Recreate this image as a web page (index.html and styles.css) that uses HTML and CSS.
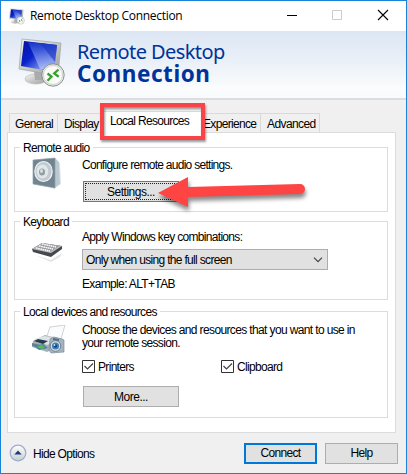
FILE: index.html
```html
<!DOCTYPE html>
<html lang="en">
<head>
<meta charset="utf-8">
<title>Remote Desktop Connection</title>
<link rel="stylesheet" href="styles.css">
</head>
<body>
<svg class="defs" width="0" height="0" aria-hidden="true">
  <defs>
    <linearGradient id="screen" x1="0" y1="0" x2="1" y2="1"><stop offset="0" stop-color="#0711a0"/><stop offset=".4" stop-color="#0922cc"/><stop offset=".75" stop-color="#829cf0"/><stop offset="1" stop-color="#2544c8"/></linearGradient>
    <linearGradient id="shine" x1="0" y1="0" x2="0" y2="1"><stop offset="0" stop-color="#1a3cd0"/><stop offset="1" stop-color="#c6d4fb"/></linearGradient>
    <linearGradient id="silver" x1="0" y1="0" x2="1" y2="1"><stop offset="0" stop-color="#f5f5f3"/><stop offset="1" stop-color="#9c9d9b"/></linearGradient>
    <symbol id="monitor" viewBox="0 0 48 50">
      <ellipse cx="18" cy="41" rx="11" ry="5" fill="url(#silver)" stroke="#b5b8ba" stroke-width=".6"/>
      <path d="M16 33l13 2-2 7H17z" fill="#a9acad"/>
      <path d="M4 1L43 5 40 38 1 31z" fill="url(#silver)" stroke="#a1a3a3" stroke-width=".7"/>
      <path d="M6 3L39 7 36 34 3 28z" fill="url(#screen)"/>
      <path d="M10 4L39 7 36 34 22 31z" fill="url(#shine)" opacity=".8"/>
      <path d="M22 5L39 7 37 24z" fill="#1a35c0" opacity=".6"/>
      <circle cx="35" cy="37" r="11.2" fill="#e9eae8" stroke="#777b79" stroke-width=".8"/>
      <circle cx="35" cy="37" r="9.5" fill="#fafaf9" stroke="#c2c5c2" stroke-width=".7"/>
      <path d="M29.500 35.500l4 3.200-4 4M40.500 31.500l-4.300 4 4.500 3.300" fill="none" stroke="#36a12d" stroke-width="2.300"/>
    </symbol>
  </defs>
</svg>
<div class="window">
  <header class="titlebar">
    <svg class="app-icon" viewBox="0 0 48 50"><use href="#monitor"/></svg>
    <span class="title">Remote Desktop Connection</span>
    <svg class="controls" viewBox="0 0 102 12"><path d="M0 6.500h10" stroke="#000"/><path d="M45.500 1.500h9v9h-9z" fill="none" stroke="#ccc"/><path d="M91 1l10 10M101 1L91 11" stroke="#000" stroke-width="1.100"/></svg>
  </header>
  <section class="banner">
    <svg class="logo" viewBox="0 0 48 50"><use href="#monitor"/></svg>
    <h1><span class="light">Remote Desktop</span><span class="bold">Connection</span></h1>
  </section>
  <main>
    <nav class="tabs">
      <span class="tab general">General</span><span class="tab display">Display</span><span class="tab selected">Local Resources</span><span class="tab experience">Experience</span><span class="tab advanced">Advanced</span>
    </nav>
    <div class="panel">
      <section class="group audio">
        <h2>Remote audio</h2>
        <svg class="icon" viewBox="0 0 34 34">
          <path d="M24 4l4 2 1 21-7 5-3-2z" fill="#e0e5e9"/><path d="M23 1l4 4 1 22-6 4z" fill="#bcc8d1"/>
          <path d="M1 3L23 1v30L1 27z" fill="#718490" stroke="#92a0aa" stroke-width=".7"/>
          <ellipse cx="11.500" cy="14.500" rx="8.700" ry="10" fill="#c1cbd1" stroke="#edf1f3" stroke-width="1.200"/>
          <ellipse cx="10.500" cy="14.500" rx="5.800" ry="7" fill="#e1e6e8"/><ellipse cx="10" cy="15" rx="3" ry="3.600" fill="#8f9da5"/><ellipse cx="9.500" cy="14" rx="1.500" ry="2" fill="#d9e0e3"/>
        </svg>
        <div class="content">
          <p class="configure">Configure remote audio settings.</p>
          <button class="settings"><span>Settings...</span></button>
        </div>
      </section>
      <section class="group keyboard">
        <h2>Keyboard</h2>
        <svg class="icon" viewBox="0 0 34 34">
          <path d="M3 20l16 5 11-7-2 4-9 5z" fill="#e4e4e4"/><path d="M0 14l10-6 20 3v3l-11 8L1 17z" fill="#45484d"/><path d="M0 14l10-6 20 3-11 7z" fill="#b7babd"/>
          <path d="M3 13.500l8-5 16 2.500-9 5.500z" fill="#96999c"/><path d="M4 13l14 3M7 11l14 3M10 9l14 3" stroke="#fafafa" stroke-width="1.500" stroke-dasharray="1.700 .5"/>
        </svg>
        <div class="content">
          <p class="apply">Apply Windows key combinations:</p>
          <div class="select"><span>Only when using the full screen</span><svg viewBox="0 0 10 6"><path d="M1 .7l4 4 4-4" fill="none" stroke="#444" stroke-width="1.200"/></svg></div>
          <p class="example">Example: ALT+TAB</p>
        </div>
      </section>
      <section class="group devices">
        <h2>Local devices and resources</h2>
        <svg class="icon" viewBox="0 0 34 34">
          <path d="M1 16l12-6 16 4v7L15 27 0 22z" fill="#a7afb6"/><path d="M15 11l3-9 15-2-4 14z" fill="#fbfcfd" stroke="#b9c0c4" stroke-width=".7"/>
          <path d="M2 14l11-3 16 4-14 5z" fill="#dfe4e7"/><path d="M6 14l10 2-5 3-9-3z" fill="#293b4c"/><path d="M0 18l13 3v3L0 21z" fill="#697e8c"/><path d="M2 21l9-2 5 4-9 2z" fill="#398ba9"/><path d="M5 22l4-2 4 2-3 2z" fill="#68b74b"/>
          <path d="M18 14l4-2 8 2 2 1v12l-13 1-2-3z" fill="#a7b4bf" stroke="#6c8190" stroke-width=".6"/><path d="M21 13l6 1v2l-6-1z" fill="#526f86"/>
          <circle cx="23.500" cy="21" r="5.300" fill="#d9e1e6" stroke="#5d7181" stroke-width=".8"/><circle cx="23.500" cy="21" r="3.600" fill="#3f80b9"/><circle cx="23.500" cy="21" r="1.700" fill="#174578"/><circle cx="22.500" cy="20" r=".9" fill="#b4e3ff"/>
        </svg>
        <div class="content">
          <p class="choose">Choose the devices and resources that you want to use in</p>
          <p class="session">your remote session.</p>
          <div class="checks">
            <label class="printers"><svg class="box" viewBox="0 0 13 13"><path d="M.5.5h12v12H.5z" fill="#fff" stroke="#333"/><path d="M2.500 6l3 3 5.500-5.500" fill="none" stroke="#444" stroke-width="1.200"/></svg><span>Printers</span></label>
            <label class="clipboard"><svg class="box" viewBox="0 0 13 13"><path d="M.5.5h12v12H.5z" fill="#fff" stroke="#333"/><path d="M2.500 6l3 3 5.500-5.500" fill="none" stroke="#444" stroke-width="1.200"/></svg><span>Clipboard</span></label>
          </div>
          <button class="more">More...</button>
        </div>
      </section>
    </div>
  </main>
  <footer>
    <svg class="collapse" viewBox="0 0 18 18"><defs><linearGradient id="round" x2="0" y2="1"><stop stop-color="#fff"/><stop offset=".5" stop-color="#e4e6e2"/><stop offset="1" stop-color="#c6d0cd"/></linearGradient></defs><circle cx="9" cy="9" r="7.800" fill="url(#round)" stroke="#9eabd6" stroke-width="1.200"/><path d="M5.300 10.500L9 6.500l3.700 4z" fill="#183b83"/></svg>
    <span class="hide">Hide Options</span>
    <button class="connect">Connect</button>
    <button class="help">Help</button>
  </footer>
  <div class="highlight"></div>
  <svg class="arrow" viewBox="0 0 160 48"><path d="M5 19L35 3v10L147 10a5 5 0 0 1 0 10L35 23v10z" fill="#ff4444"/></svg>
</div>
</body>
</html>
```
FILE: styles.css
```css
* { box-sizing: border-box; }
body { margin: 0; overflow: hidden; font: 12px/14px "Liberation Sans", sans-serif; letter-spacing: -.68px; color: #000; }
h1, h2, p { margin: 0; font-weight: normal; }
.defs { position: absolute; }
svg { display: block; flex: none; }
.window { position: relative; width: 407px; height: 474px; border: 1px solid #1883d7; background: #f0f0f0; }
.titlebar { height: 30px; display: flex; align-items: center; background: #fff; padding-left: 8px; }
.app-icon { width: 16px; height: 17px; }
.title { font: 12px/16px "Open Sans", sans-serif; letter-spacing: -.3px; margin-left: 5px; white-space: nowrap; }
.controls { width: 102px; height: 12px; margin: 0 17px 3px auto; }
.banner { height: 69px; display: flex; padding: 7px 0 0 17px; background: linear-gradient(#dce6f3, #eaf0f8 45%, #fafcfd 85%, #f8fbfe); border-bottom: 2px solid #dddddf; }
.logo { width: 48px; height: 50px; }
h1 { display: flex; flex-direction: column; margin-left: 11px; padding-top: 2px; font-family: "Noto Sans", sans-serif; color: #003399; white-space: nowrap; }
.light { font-size: 20px; line-height: 23px; letter-spacing: -.6px; }
.bold { font-size: 22.5px; line-height: 21px; letter-spacing: .55px; font-weight: bold; }
main { padding: 11px 10px 0 6px; }
.tabs { display: flex; align-items: flex-end; height: 21px; padding-left: 2px; }
.tab { height: 19px; line-height: 20px; border: 1px solid #d9d9d9; border-width: 1px 1px 0 0; white-space: nowrap; padding-left: 5px; }
.general { width: 49px; border-left-width: 1px; }
.display { width: 45px; padding-left: 6px; }
.selected { width: 100px; height: 22px; background: #fff; margin-bottom: -1px; padding-left: 7px; line-height: 19px; }
.experience { width: 58px; padding-left: 0; }
.advanced { width: 59px; padding-left: 6px; letter-spacing: -.6px; }
.panel { height: 301px; background: #fff; border: 1px solid #dcdcdc; padding: 14px 7px 0 6px; }
.group { display: grid; grid-template-columns: 67px 1fr; grid-template-rows: 7px auto; border: 1px solid #dcdcdc; white-space: nowrap; }
.group h2 { font: inherit; grid-column: 1 / -1; height: 14px; background: #fff; margin: -7px 0 0 5px; padding: 0 3px; width: max-content; }
.icon { width: 34px; height: 34px; margin-left: 17px; }
.audio { height: 65px; }
.audio .icon { margin-top: 2px; }
.audio .content { padding-top: 3px; }
.configure { letter-spacing: -.72px; }
.keyboard { height: 79px; margin-top: 9px; }
.keyboard .icon { margin-top: 6px; }
.keyboard .content { padding-top: 1px; }
.devices { height: 107px; margin-top: 11px; }
.devices .icon { margin-top: 6px; }
.devices .content { padding-top: 4px; }
button { font: inherit; letter-spacing: inherit; color: #000; padding: 0; border: 1px solid #adadad; background: #e1e1e1; border-radius: 0; }
.settings { display: block; width: 96px; height: 21px; margin: 9px 0 0 1px; border: 1px solid #777; padding: 1px; }
.settings span { display: block; height: 17px; line-height: 16px; border: 1px dotted #222; }
.select { width: 246px; height: 21px; border: 1px solid #adadad; background: #e1e1e1; display: flex; align-items: center; justify-content: space-between; padding: 0 4px 0 3px; margin-top: 5px; }
.select svg { width: 10px; height: 6px; }
.example { margin-top: 7px; letter-spacing: -.65px; }
.choose { letter-spacing: -.63px; }
.session { margin-top: -1px; }
.checks { display: flex; margin-top: 10px; line-height: 15px; }
.checks label { display: flex; gap: 3px; width: 139px; }
.box { width: 13px; height: 13px; }
.more, .settings { letter-spacing: -.5px; }
.more { width: 96px; height: 21px; margin: 11px 0 0 1px; display: block; }
footer { display: flex; align-items: center; height: 40px; padding-left: 8px; }
.collapse { width: 18px; height: 18px; }
.hide { margin-left: 6px; padding-top: 2px; }
footer button { width: 73px; height: 21px; }
.connect { margin-left: auto; border: 2px solid #0078d7; }
.help { margin: 0 8px; }
.highlight { position: absolute; left: 99px; top: 102px; width: 105px; height: 37px; border: 4px solid #f94346; filter: drop-shadow(1px 2px 1px #0006); }
.arrow { position: absolute; width: 160px; height: 48px; left: 152px; top: 173px; filter: drop-shadow(1px 4px 2px #0007); }
```
